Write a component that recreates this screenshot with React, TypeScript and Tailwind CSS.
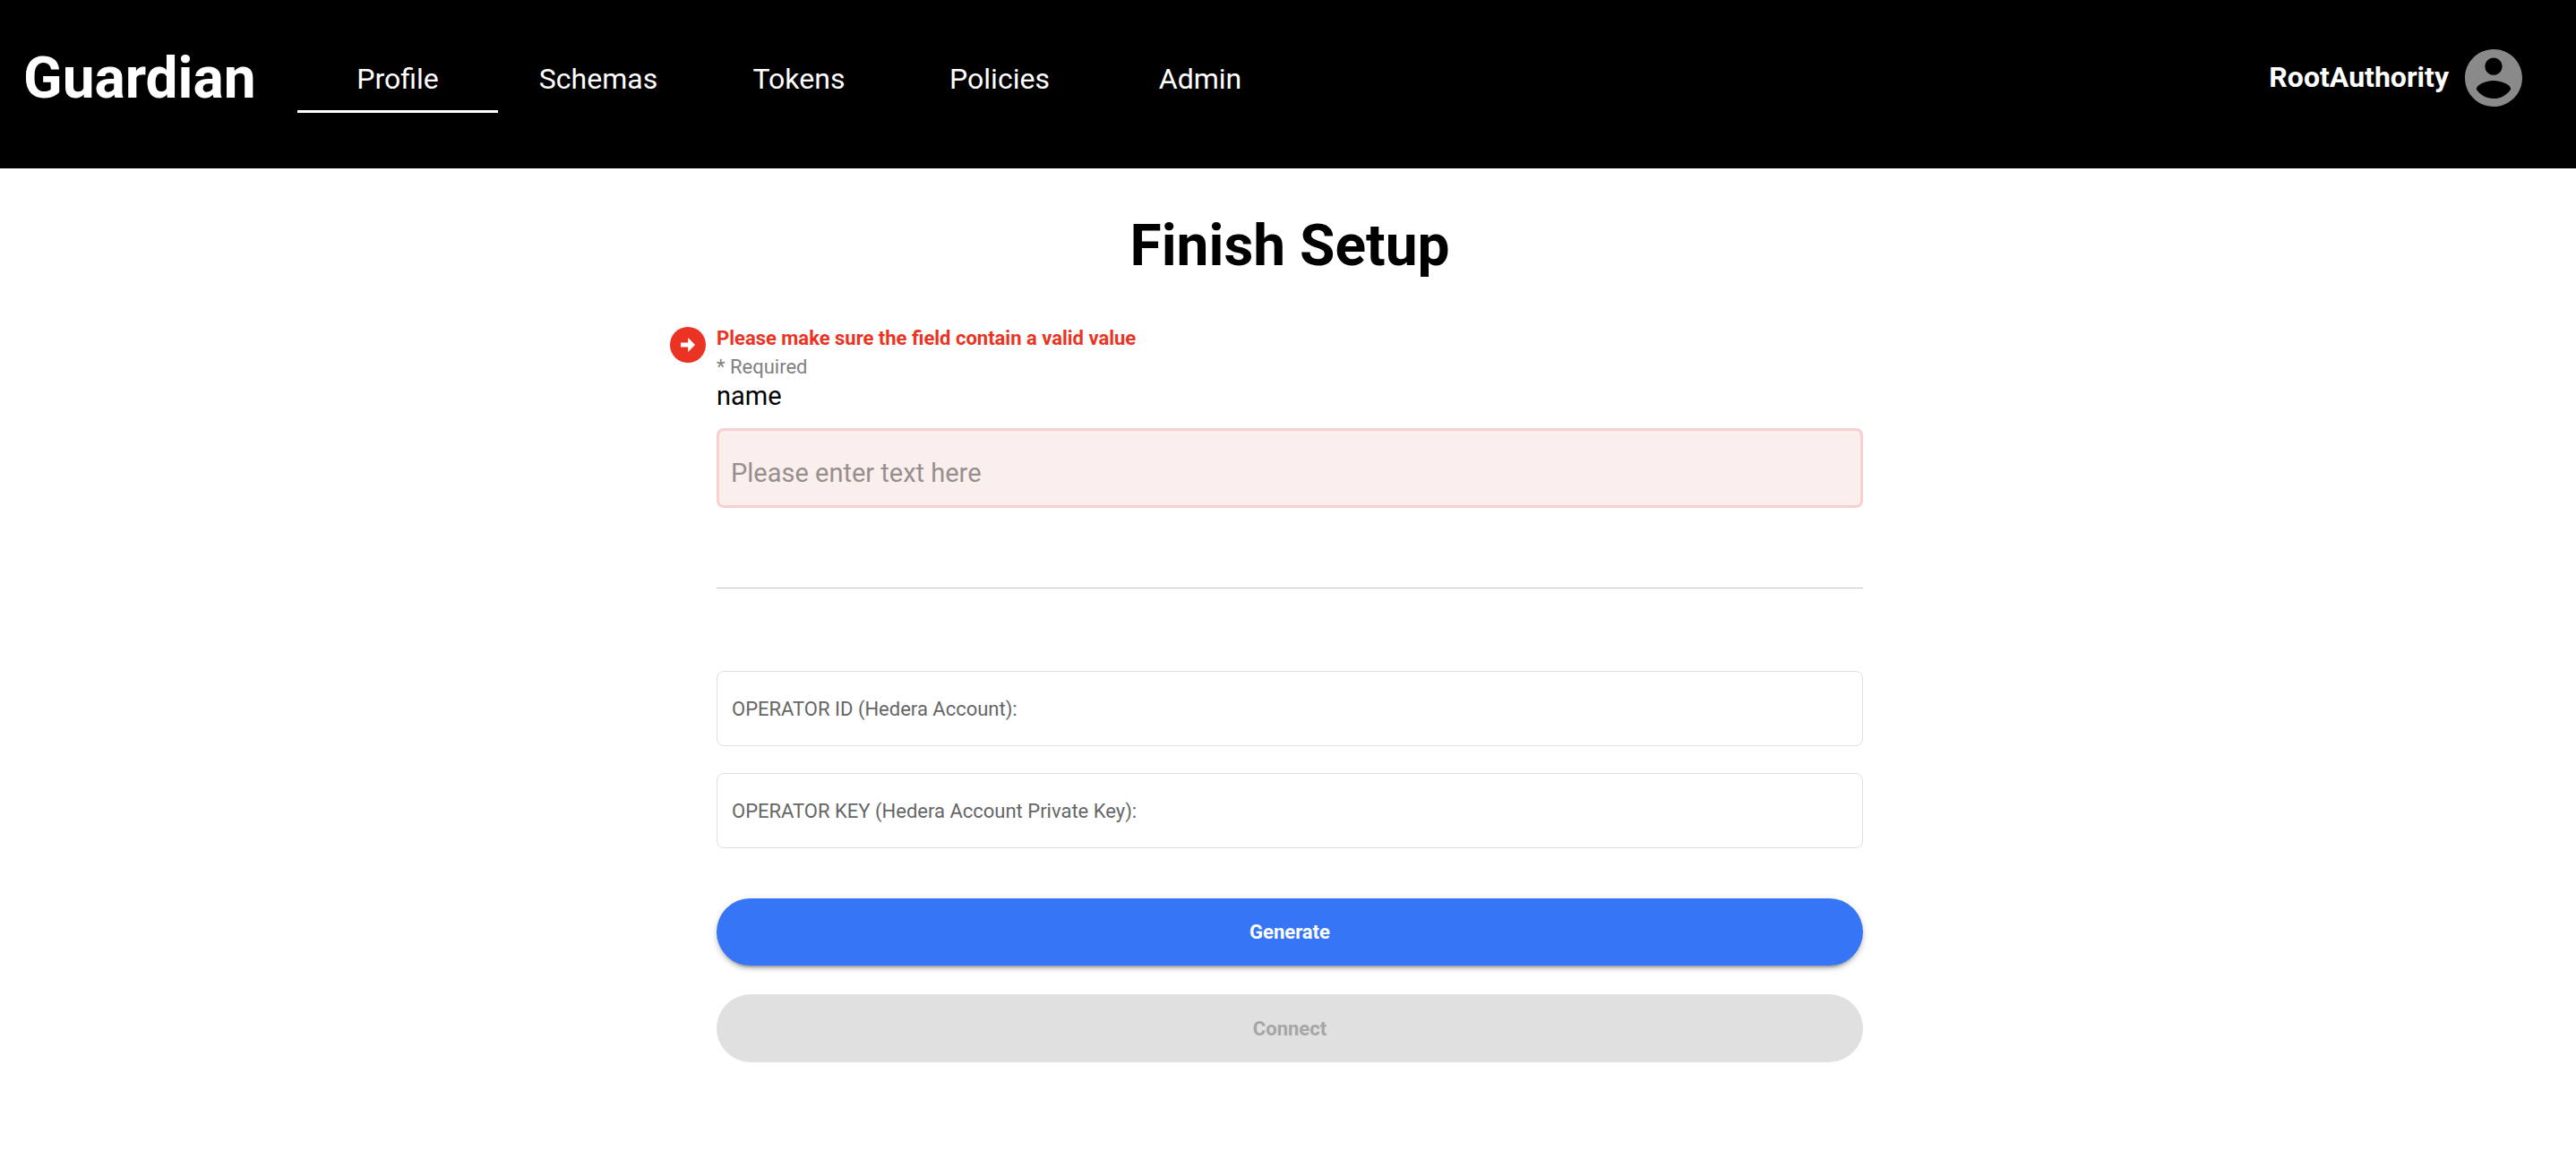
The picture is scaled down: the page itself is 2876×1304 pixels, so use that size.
import React, { useState } from "react";

const navItems = ["Profile", "Schemas", "Tokens", "Policies", "Admin"];

function AccountIcon() {
  return (
    <svg viewBox="2 2 20 20" className="size-16 fill-[#8a8a8a]" aria-hidden="true">
      <path d="M12 2C6.48 2 2 6.48 2 12s4.48 10 10 10 10-4.48 10-10S17.52 2 12 2zm0 3c1.66 0 3 1.34 3 3s-1.34 3-3 3-3-1.34-3-3 1.34-3 3-3zm0 14.2c-2.5 0-4.71-1.28-6-3.22.03-1.99 4-3.08 6-3.08 1.99 0 5.97 1.09 6 3.08-1.29 1.94-3.5 3.22-6 3.22z" />
    </svg>
  );
}

function ErrorArrowIcon() {
  return (
    <svg viewBox="0 0 40 40" className="size-10" aria-hidden="true">
      <circle cx="20" cy="20" r="20" className="fill-[#ea3323]" />
      <path d="M12 17.5h8.2V12L28 20l-7.8 8v-5.5H12z" fill="#fff" />
    </svg>
  );
}

function Header() {
  return (
    <header className="flex h-47 items-start bg-black text-white">
      <a href="#home" className="ml-[26px] w-[306px] pt-12 text-[64px] leading-[80px] font-bold">
        Guardian
      </a>
      <nav className="flex pt-[50px] text-[32px]">
        {navItems.map((item, i) => (
          <a
            key={item}
            href={`#${item.toLowerCase()}`}
            className={
              i === 0
                ? "flex h-19 w-56 items-center justify-center border-b-3 border-white pt-0.5"
                : "flex h-19 w-56 items-center justify-center border-b-3 border-transparent pt-0.5"
            }
          >
            {item}
          </a>
        ))}
      </nav>
      <button type="button" className="mt-[55px] mr-15 ml-auto flex items-center gap-[18px] text-[32px] font-bold">
        <span className="pb-0.5">RootAuthority</span>
        <AccountIcon />
      </button>
    </header>
  );
}

function OperatorField({ id, label }: { id: string; label: string }) {
  const [value, setValue] = useState("");
  return (
    <div className="flex h-21 items-center rounded-lg border border-[#dfdfdf] px-4 text-[22px] text-[#666]">
      <label htmlFor={id}>{label}</label>
      <input
        id={id}
        value={value}
        onChange={(e) => setValue(e.target.value)}
        className="ml-4 h-full min-w-0 flex-1 bg-transparent outline-none"
      />
    </div>
  );
}

export default function App() {
  return (
    <div className="min-h-screen bg-white font-[Roboto,sans-serif] text-black">
      <Header />
      <div className="pl-1">
        <main className="mx-auto w-full max-w-[1280px] pt-[47px]">
          <h1 className="text-center text-[64px] leading-[80px] font-bold">Finish Setup</h1>
          <form className="mt-[47px] flex flex-col" onSubmit={(e) => e.preventDefault()}>
            <div className="relative flex flex-col">
              <span className="absolute top-[3px] -left-13">
                <ErrorArrowIcon />
              </span>
              <p id="name-error" className="text-[22px] leading-8 font-bold text-[#ea3323]">
                Please make sure the field contain a valid value
              </p>
              <p className="text-[22px] leading-8 text-[#808080]">* Required</p>
              <label htmlFor="name" className="text-[29px] leading-8">
                name
              </label>
              <input
                id="name"
                placeholder="Please enter text here"
                aria-describedby="name-error"
                aria-invalid="true"
                className="mt-5 h-[89px] rounded-lg border-3 border-[#f6d1d0] bg-[#fbefee] px-[13px] pt-2.5 text-[29px] outline-none placeholder:text-[#958f8e]"
              />
            </div>
            <hr className="mt-[89px] border-t border-[#c4c4c4]" />
            <div className="mt-23 flex flex-col gap-[30px]">
              <OperatorField id="operator-id" label="OPERATOR ID (Hedera Account):" />
              <OperatorField id="operator-key" label="OPERATOR KEY (Hedera Account Private Key):" />
            </div>
            <div className="mt-14 flex flex-col gap-8 text-[22px] font-bold">
              <button
                type="button"
                className="h-[75px] rounded-full bg-[#3575f6] text-white shadow-[0_6px_2px_-4px_rgba(0,0,0,0.2),0_4px_4px_0_rgba(0,0,0,0.14),0_2px_10px_0_rgba(0,0,0,0.12)]"
              >
                Generate
              </button>
              <button type="button" disabled className="h-19 rounded-full bg-[#e0e0e0] text-[#a6a6a6]">
                Connect
              </button>
            </div>
          </form>
        </main>
      </div>
    </div>
  );
}
